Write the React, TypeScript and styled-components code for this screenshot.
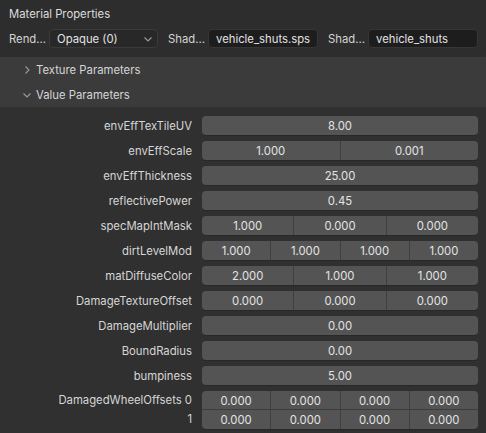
import React from 'react';
import styled, { createGlobalStyle } from 'styled-components';

const GlobalStyle = createGlobalStyle`
  html, body {
    margin: 0;
    padding: 0;
    background: #303030;
  }
  body {
    font-family: Inter, "Noto Sans", "DejaVu Sans", sans-serif;
    font-size: 11.3px;
    color: #d8d8d8;
  }
`;

const Page = styled.div`
  width: 486px;
  height: 433px;
  overflow: hidden;
  background: #303030;
  display: flex;
  flex-direction: column;
`;

const Header = styled.div`
  background: #2d2d2d;
  border-radius: 0 0 5px 5px;
  padding: 6px 8px 9px 9px;
  display: flex;
  flex-direction: column;
  gap: 7px;
`;

const Title = styled.div`
  height: 16px;
  line-height: 16px;
  color: #dcdcdc;
`;

const HeaderRow = styled.div`
  display: flex;
  align-items: center;
  height: 19px;
`;

const SmallLabel = styled.span`
  width: 40px;
  flex: none;
  color: #d4d4d4;
  white-space: nowrap;
`;

const Dropdown = styled.div`
  width: 109px;
  height: 19px;
  box-sizing: border-box;
  background: #282828;
  border: 1px solid #3a3a3a;
  border-radius: 4px;
  display: flex;
  align-items: center;
  justify-content: space-between;
  padding: 0 4px 0 7px;
  margin-right: 10px;
  color: #e2e2e2;
`;

const TextField = styled.div`
  width: 110px;
  height: 19px;
  box-sizing: border-box;
  background: #1d1d1d;
  border: 1px solid #363636;
  border-radius: 4px;
  display: flex;
  align-items: center;
  padding: 0 7px;
  margin-right: 10px;
  color: #e2e2e2;
  &:last-child {
    margin-right: 0;
  }
`;

const SubPanel = styled.div`
  background: #3b3b3b;
  display: flex;
  flex-direction: column;
`;

const SubHeader = styled.div`
  height: 25px;
  display: flex;
  align-items: center;
  padding-left: 22px;
  gap: 4px;
  color: #d6d6d6;
`;

const Props = styled.div`
  display: flex;
  flex-direction: column;
  gap: 6px;
  padding: 9px 8px 0 0;
`;

const PropRow = styled.div`
  display: grid;
  grid-template-columns: 1fr 276px;
  column-gap: 10px;
  align-items: center;
`;

const PropLabel = styled.div`
  text-align: right;
  color: #d6d6d6;
  white-space: nowrap;
`;

const StackLabel = styled(PropLabel)`
  height: 19px;
  line-height: 19px;
`;

const Group = styled.div`
  display: flex;
  flex-direction: column;
`;

const Field = styled.div<{ $top?: boolean; $bottom?: boolean }>`
  height: 19px;
  display: flex;
  background: #545454;
  border-radius: ${p => (p.$top === false ? '0' : '4px')} ${p => (p.$top === false ? '0' : '4px')}
    ${p => (p.$bottom === false ? '0' : '4px')} ${p => (p.$bottom === false ? '0' : '4px')};
  box-shadow: ${p => (p.$bottom === false ? 'inset 0 -1px 0 #3c3c3c' : '0 1px 0 #282828')};
  overflow: hidden;
`;

const Cell = styled.div`
  flex: 1;
  display: flex;
  align-items: center;
  justify-content: center;
  color: #e4e4e4;
  border-left: 1px solid #3f3f3f;
  &:first-child {
    border-left: none;
  }
`;

const Chevron = ({ down }: { down?: boolean }) => (
  <svg width="10" height="10" viewBox="0 0 10 10" fill="none">
    {down ? (
      <path d="M1.5 3.5 L5 7 L8.5 3.5" stroke="#9a9a9a" strokeWidth="1.1" />
    ) : (
      <path d="M3.5 1.5 L7 5 L3.5 8.5" stroke="#9a9a9a" strokeWidth="1.1" />
    )}
  </svg>
);

const props: { label: string; values: string[] }[] = [
  { label: 'envEffTexTileUV', values: ['8.00'] },
  { label: 'envEffScale', values: ['1.000', '0.001'] },
  { label: 'envEffThickness', values: ['25.00'] },
  { label: 'reflectivePower', values: ['0.45'] },
  { label: 'specMapIntMask', values: ['1.000', '0.000', '0.000'] },
  { label: 'dirtLevelMod', values: ['1.000', '1.000', '1.000', '1.000'] },
  { label: 'matDiffuseColor', values: ['2.000', '1.000', '1.000'] },
  { label: 'DamageTextureOffset', values: ['0.000', '0.000', '0.000'] },
  { label: 'DamageMultiplier', values: ['0.00'] },
  { label: 'BoundRadius', values: ['0.00'] },
  { label: 'bumpiness', values: ['5.00'] },
];

const wheelOffsets = [
  ['0.000', '0.000', '0.000', '0.000'],
  ['0.000', '0.000', '0.000', '0.000'],
];

const App: React.FC = () => {
  return (
    <Page>
      <GlobalStyle />
      <Header>
        <Title>Material Properties</Title>
        <HeaderRow>
          <SmallLabel>Rend...</SmallLabel>
          <Dropdown>
            <span>Opaque (0)</span>
            <Chevron down />
          </Dropdown>
          <SmallLabel>Shad...</SmallLabel>
          <TextField>vehicle_shuts.sps</TextField>
          <SmallLabel>Shad...</SmallLabel>
          <TextField>vehicle_shuts</TextField>
        </HeaderRow>
      </Header>
      <SubPanel>
        <SubHeader>
          <Chevron />
          <span>Texture Parameters</span>
        </SubHeader>
        <SubHeader>
          <Chevron down />
          <span>Value Parameters</span>
        </SubHeader>
      </SubPanel>
      <Props>
        {props.map(p => (
          <PropRow key={p.label}>
            <PropLabel>{p.label}</PropLabel>
            <Field>
              {p.values.map((v, i) => (
                <Cell key={i}>{v}</Cell>
              ))}
            </Field>
          </PropRow>
        ))}
        <PropRow>
          <Group>
            <StackLabel>DamagedWheelOffsets 0</StackLabel>
            <StackLabel>1</StackLabel>
          </Group>
          <Group>
            {wheelOffsets.map((row, r) => (
              <Field key={r} $top={r === 0} $bottom={r === wheelOffsets.length - 1}>
                {row.map((v, i) => (
                  <Cell key={i}>{v}</Cell>
                ))}
              </Field>
            ))}
          </Group>
        </PropRow>
      </Props>
    </Page>
  );
};

export default App;
